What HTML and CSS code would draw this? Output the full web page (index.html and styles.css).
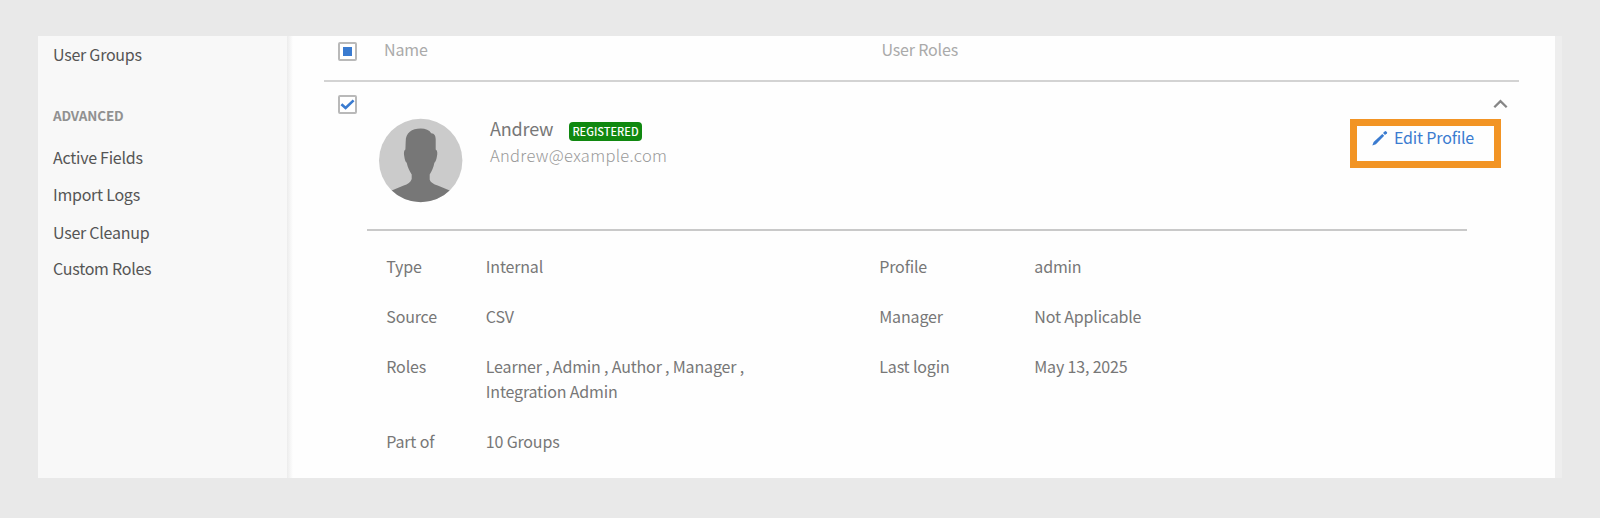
FILE: index.html
```html
<!DOCTYPE html>
<html lang="en">
<head>
<meta charset="utf-8">
<title>Users</title>
<link rel="stylesheet" href="styles.css">
</head>
<body>
<div class="panel">
  <nav class="sidebar">
    <a class="nav-item first">User Groups</a>
    <h2 class="nav-heading">ADVANCED</h2>
    <a class="nav-item">Active Fields</a>
    <a class="nav-item">Import Logs</a>
    <a class="nav-item cleanup">User Cleanup</a>
    <a class="nav-item">Custom Roles</a>
  </nav>
  <main class="content">
    <header class="table-head">
      <span class="checkbox"><span class="partial"></span></span>
      <span class="col-name">Name</span>
      <span class="col-roles">User Roles</span>
    </header>
    <section class="user">
      <span class="checkbox checked">
        <svg width="15" height="15" viewBox="0 0 15 15"><path d="M1.400 7.200 L5.600 11 L13.600 3.400" fill="none" stroke="#3a7bd0" stroke-width="2.600"/></svg>
      </span>
      <div class="user-body">
        <div class="summary">
          <svg class="avatar" width="85" height="85" viewBox="-.7 -.5 85 85">
            <clipPath id="disc"><circle cx="42" cy="42" r="41.7"/></clipPath>
            <circle cx="42" cy="42" r="41.7" fill="#cbcbcb"/>
            <path clip-path="url(#disc)" fill="#777" d="M42 10 C47 10 50.500 11.500 52.500 14.700 C56 15 57 17.500 57 21 L57 31 C58.800 32 59 35 58.200 38 C57.800 41 57 43 55.700 44.300 C54.800 49 53 53 51 56 L51 61 C51.600 64 55 65.600 59 67 L71 72 L71 84 L13 84 L13 72 L25 67 C29 65.600 32 64 33 60.500 L33 56 C31 53 29 49 28 44.300 C26.500 43 26 41 25.600 38 C25 35 25 32 26.700 31 L27 23 C27 14 33 10 42 10 Z"/>
          </svg>
          <div class="identity">
            <div class="name-row"><span class="name">Andrew</span><span class="badge">REGISTERED</span></div>
            <div class="email">Andrew@example.com</div>
          </div>
          <div class="actions">
            <svg class="chevron" width="15" height="10" viewBox="0 0 15 10"><path d="M1.300 8.300 L7.500 2.100 L13.700 8.300" fill="none" stroke="#868686" stroke-width="2.300"/></svg>
            <a class="edit">
              <svg width="16" height="16" viewBox="0 0 16 16" fill="#3a7bd0"><path d="M.3 15.500 L1.600 12 L10.300 3.900 L12.200 5.700 L3.900 14.300 Z"/><path d="M11 3 L12.900 1.200 Q13.500 .8 14 1.300 L15 2.300 Q15.400 2.800 15 3.300 L13 4.900 Z"/></svg>
              <span>Edit Profile</span>
            </a>
          </div>
        </div>
        <dl class="details">
          <dt>Type</dt><dd>Internal</dd><dt>Profile</dt><dd>admin</dd>
          <dt>Source</dt><dd>CSV</dd><dt>Manager</dt><dd>Not Applicable</dd>
          <dt>Roles</dt><dd>Learner , Admin , Author , Manager ,<br>Integration Admin</dd><dt>Last login</dt><dd>May 13, 2025</dd>
          <dt>Part of</dt><dd>10 Groups</dd>
        </dl>
      </div>
    </section>
  </main>
</div>
</body>
</html>
```
FILE: styles.css
```css
* { box-sizing: border-box; }
body {
  margin: 0;
  height: 518px;
  padding: 36px 0 0 38px;
  overflow: hidden;
  background: #e9e9e9;
  font: 16px/24px "Noto Sans CJK SC", "Noto Sans", sans-serif;
  letter-spacing: -.17px;
}
.panel {
  display: flex;
  width: 1524px;
  height: 442px;
  background: #fefefe;
  border-right: 7px solid #eee;
}
.sidebar {
  width: 249px;
  flex: none;
  padding: 6px 0 0 15px;
  background: #f8f8f8;
  letter-spacing: -.25px;
}
.nav-item { display: block; height: 37px; color: #555; }
.nav-item.first { height: 60px; }
.nav-item.cleanup { padding-top: 1px; }
.nav-heading {
  margin: 0;
  height: 43px;
  font-size: 13.5px;
  line-height: 27px;
  font-weight: 700;
  letter-spacing: -.15px;
  color: #919191;
}
.content {
  flex: 1;
  padding-left: 37px;
  background: linear-gradient(90deg, #ececec, #fefefe 6px);
}
.table-head {
  display: flex;
  width: 1195px;
  height: 46px;
  padding: 6px 0 0 14px;
  border-bottom: 2px solid #d3d3d3;
  color: #aaa;
}
.table-head .col-name { width: 497.500px; margin: -5px 0 0 27px; }
.table-head .col-roles { margin-top: -5px; }
.checkbox {
  display: flex;
  flex: none;
  align-items: center;
  justify-content: center;
  width: 19px;
  height: 19px;
  border: 2px solid #b9b9b9;
  border-radius: 2px;
  background: #fff;
}
.partial { width: 9px; height: 9px; background: #3a7bd0; }
.user { display: flex; padding: 13px 0 0 14px; }
.user-body { width: 1163px; margin-left: 10px; }
.summary {
  display: flex;
  width: 1100px;
  height: 136px;
  padding-left: 11px;
  border-bottom: 2px solid #c9c9c9;
}
.avatar { flex: none; margin-top: 23px; }
.identity { width: 300px; margin: 21px 0 0 27px; flex: none; }
.name-row { display: flex; height: 26px; }
.name { width: 79px; font-size: 18px; line-height: 24px; color: #777; }
.badge {
  width: 73px;
  height: 19px;
  margin-top: 6px;
  border-radius: 4px;
  background: #108810;
  color: #fff;
  font-size: 11px;
  font-weight: 500;
  letter-spacing: 0;
  line-height: 19px;
  text-align: center;
}
.email { font-size: 16.5px; font-weight: 300; line-height: 26px; letter-spacing: .3px; color: #999; }
.actions {
  display: flex;
  flex: none;
  flex-direction: column;
  align-items: flex-end;
  width: 151px;
  margin: 4px 0 0 560px;
}
.chevron { margin-right: -7px; }
.edit {
  display: flex;
  gap: 6px;
  width: 151px;
  height: 49px;
  margin-top: 10px;
  padding: 0 0 0 15px;
  border: 7px solid #f29424;
  color: #3a7bd0;
  line-height: 22px;
}
.edit svg { margin-top: 4px; }
.details {
  display: grid;
  grid-template-columns: 99.500px 393.500px 155px 200px;
  row-gap: 25px;
  margin: 23px 0 0 19.300px;
  line-height: 25px;
  color: #777;
}
.details dd { margin: 0; }
```
